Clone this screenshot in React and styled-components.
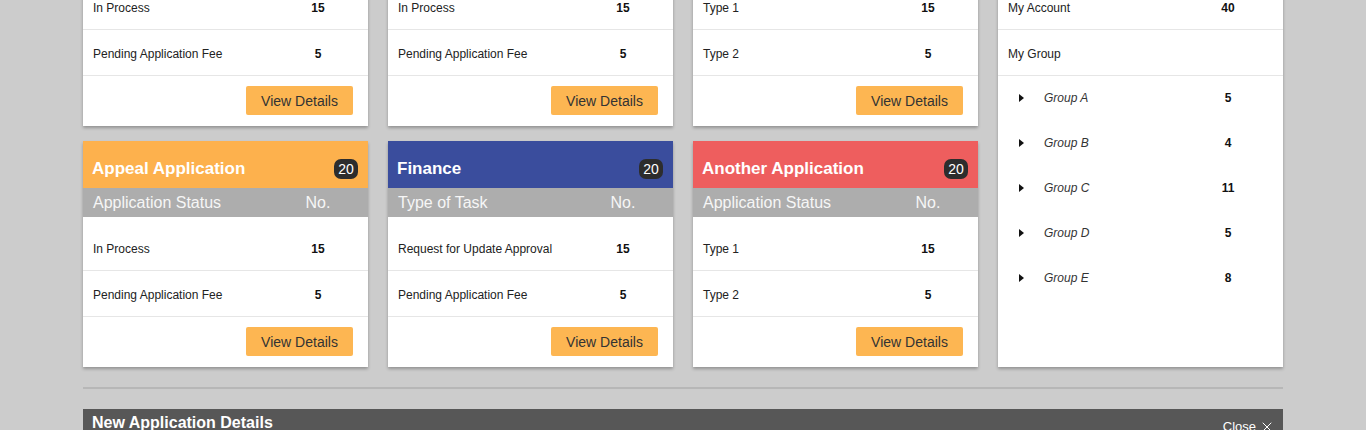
import styled, { createGlobalStyle } from "styled-components";
import { X } from "lucide-react";

const GlobalStyle = createGlobalStyle`
	html, body {
		margin: 0;
		padding: 0;
		background: #cccccc;
		font-family: "Liberation Sans", Arial, sans-serif;
		overflow: hidden;
	}
`;

const Page = styled.div`
	width: 1200px;
	margin: -100px auto 0;
`;

const CardGrid = styled.div`
	display: grid;
	grid-template-columns: repeat(4, 285px);
	column-gap: 20px;
	row-gap: 15px;
`;

const Card = styled.div`
	background: #fff;
	box-shadow: 0 2px 3px rgba(0, 0, 0, 0.28);
	display: flex;
	flex-direction: column;
	grid-row: ${(props) => (props.$tall ? "span 2" : "auto")};
`;

const CardHeader = styled.div`
	height: 47px;
	box-sizing: border-box;
	padding: 8px 10px 0 9px;
	display: flex;
	align-items: center;
	justify-content: space-between;
	background: ${(props) => props.$color};
`;

const Title = styled.span`
	color: #fff;
	font-size: 17px;
	font-weight: bold;
`;

const Badge = styled.span`
	width: 24px;
	height: 20px;
	border-radius: 7px;
	background: #2d2d2d;
	color: #fff;
	font-size: 14px;
	display: flex;
	align-items: center;
	justify-content: center;
`;

const StatusBar = styled.div`
	height: 29px;
	background: #adadad;
	color: #f6f6f6;
	font-size: 16px;
	display: flex;
	align-items: center;
	padding: 0 ${(props) => (props.$wide ? 25 : 20)}px 0 10px;
`;

const Label = styled.span`
	flex: 1;
`;

const NumCol = styled.span`
	width: 60px;
	text-align: center;
`;

const Body = styled.div`
	padding-top: 8px;
`;

const Row = styled.div`
	box-sizing: border-box;
	padding: ${(props) => (props.$plain ? "0 25px 2px 10px" : `2px ${props.$wide ? 25 : 20}px 0 10px`)};
	display: flex;
	align-items: center;
	font-size: 12px;
	color: #222;
	border-bottom: ${(props) => (props.$plain ? "none" : "1px solid #e6e6e6")};
	height: ${(props) => (props.$plain ? 45 : 46)}px;
`;

const Num = styled.span`
	width: 60px;
	text-align: center;
	font-weight: bold;
	color: #111;
`;

const GroupName = styled.span`
	flex: 1;
	font-style: italic;
	color: #333;
	display: flex;
	align-items: center;
	padding-left: 11px;
	gap: 20px;
`;

const Footer = styled.div`
	height: 50px;
	display: flex;
	align-items: flex-start;
	justify-content: flex-end;
	padding: 10px 15px 0 0;
	box-sizing: border-box;
`;

const ViewButton = styled.button`
	width: 107px;
	height: 29px;
	border: none;
	border-radius: 2px;
	background: #fdb652;
	color: #333;
	font-family: "Liberation Sans", Arial, sans-serif;
	font-size: 14px;
	cursor: pointer;
`;

const Rule = styled.hr`
	border: none;
	height: 2px;
	background: #b7b7b7;
	margin: 20px 0;
`;

const DetailsBar = styled.div`
	background: #575757;
	color: #fff;
	display: flex;
	align-items: baseline;
	justify-content: space-between;
	padding: 5px 8px 6px 9px;
	height: 40px;
	box-sizing: border-box;
`;

const DetailsTitle = styled.span`
	font-size: 16px;
	font-weight: bold;
`;

const CloseLink = styled.span`
	font-size: 13px;
	display: flex;
	align-items: center;
	gap: 3px;
	position: relative;
	top: 3px;
`;

const Caret = () => (
	<svg width="5" height="8" viewBox="0 0 5 8">
		<polygon points="0,0 5,4 0,8" fill="#111" />
	</svg>
);

const cards = [
	{
		title: "New Application",
		color: "#fdb14d",
		head: "Application Status",
		rows: [
			["In Process", 15],
			["Pending Application Fee", 5],
		],
	},
	{
		title: "Renewal Application",
		color: "#3a4d9d",
		head: "Application Status",
		rows: [
			["In Process", 15],
			["Pending Application Fee", 5],
		],
	},
	{
		title: "Other Application",
		color: "#ee5e5e",
		head: "Application Status",
		rows: [
			["Type 1", 15],
			["Type 2", 5],
		],
	},
	{
		title: "Appeal Application",
		color: "#fdb14d",
		head: "Application Status",
		rows: [
			["In Process", 15],
			["Pending Application Fee", 5],
		],
	},
	{
		title: "Finance",
		color: "#3a4d9d",
		head: "Type of Task",
		rows: [
			["Request for Update Approval", 15],
			["Pending Application Fee", 5],
		],
	},
	{
		title: "Another Application",
		color: "#ee5e5e",
		head: "Application Status",
		rows: [
			["Type 1", 15],
			["Type 2", 5],
		],
	},
];

const groups = [
	["Group A", 5],
	["Group B", 4],
	["Group C", 11],
	["Group D", 5],
	["Group E", 8],
];

function TaskCard({ card }) {
	return (
		<Card>
			<CardHeader $color={card.color}>
				<Title>{card.title}</Title>
				<Badge>20</Badge>
			</CardHeader>
			<StatusBar>
				<Label>{card.head}</Label>
				<NumCol>No.</NumCol>
			</StatusBar>
			<Body>
				{card.rows.map(([name, n]) => (
					<Row key={name}>
						<Label>{name}</Label>
						<Num>{n}</Num>
					</Row>
				))}
			</Body>
			<Footer>
				<ViewButton>View Details</ViewButton>
			</Footer>
		</Card>
	);
}

function App() {
	return (
		<>
			<GlobalStyle />
			<Page>
				<CardGrid>
					{cards.slice(0, 3).map((c) => (
						<TaskCard key={c.title} card={c} />
					))}
					<Card $tall>
						<CardHeader $color="#5a5a5a">
							<Title>My Tasks</Title>
							<Badge>40</Badge>
						</CardHeader>
						<StatusBar $wide>
							<Label>Task</Label>
							<NumCol>No.</NumCol>
						</StatusBar>
						<Body>
							<Row $wide>
								<Label>My Account</Label>
								<Num>40</Num>
							</Row>
							<Row $wide>
								<Label>My Group</Label>
							</Row>
							{groups.map(([name, n]) => (
								<Row $wide $plain key={name}>
									<GroupName>
										<Caret />
										{name}
									</GroupName>
									<Num>{n}</Num>
								</Row>
							))}
						</Body>
					</Card>
					{cards.slice(3).map((c) => (
						<TaskCard key={c.title} card={c} />
					))}
				</CardGrid>
				<Rule />
				<DetailsBar>
					<DetailsTitle>New Application Details</DetailsTitle>
					<CloseLink>
						Close <X size={16} strokeWidth={1.5} />
					</CloseLink>
				</DetailsBar>
			</Page>
		</>
	);
}

export default App;
